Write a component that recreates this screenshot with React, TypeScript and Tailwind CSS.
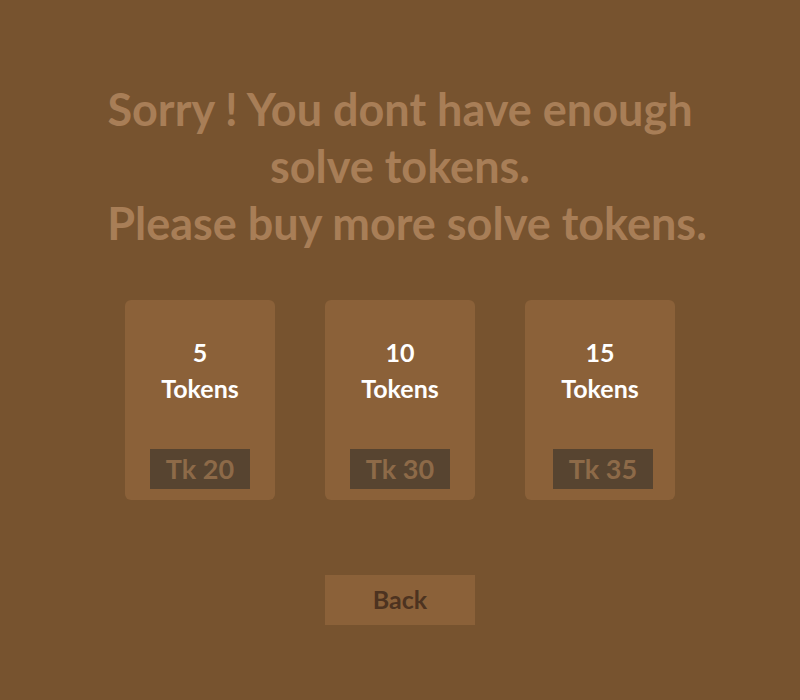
import React from 'react';

interface Pack {
  count: number;
  price: number;
  shift?: boolean;
}

const packs: Pack[] = [
  { count: 5, price: 20 },
  { count: 10, price: 30 },
  { count: 15, price: 35, shift: true },
];

const TokenCard: React.FC<{ pack: Pack }> = ({ pack }) => {
  return (
    <div className="w-[150px] h-[200px] rounded-md bg-[#8b6139] flex flex-col items-center">
      <div className="mt-[34px] text-white font-bold text-[25px] leading-[36px] text-center">
        {pack.count}
        <br />
        Tokens
      </div>
      <div
        className={
          pack.shift
            ? 'mt-auto mb-[11px] ml-[6px] w-[100px] h-[40px] bg-[#574430] flex items-center justify-center text-[#8d6a48] font-bold text-[27px]'
            : 'mt-auto mb-[11px] w-[100px] h-[40px] bg-[#574430] flex items-center justify-center text-[#8d6a48] font-bold text-[27px]'
        }
      >
        Tk {pack.price}
      </div>
    </div>
  );
};

export default function App() {
  return (
    <div
      className="w-[800px] h-[700px] bg-[#77532f] flex flex-col items-center"
      style={{ fontFamily: 'Lato, "Open Sans", sans-serif' }}
    >
      <h1 className="mt-[81px] text-[#a87e57] font-bold text-[45px] leading-[57px] text-center">
        Sorry ! You dont have enough
        <br />
        solve tokens.
        <br />
        <span className="pl-[14px]">Please buy more solve tokens.</span>
      </h1>

      <div className="mt-[48px] flex gap-[50px]">
        {packs.map((p) => (
          <TokenCard key={p.count} pack={p} />
        ))}
      </div>

      <button className="mt-[75px] w-[150px] h-[50px] bg-[#8b6139] text-[#4d3320] font-bold text-[25px]">
        Back
      </button>
    </div>
  );
}
